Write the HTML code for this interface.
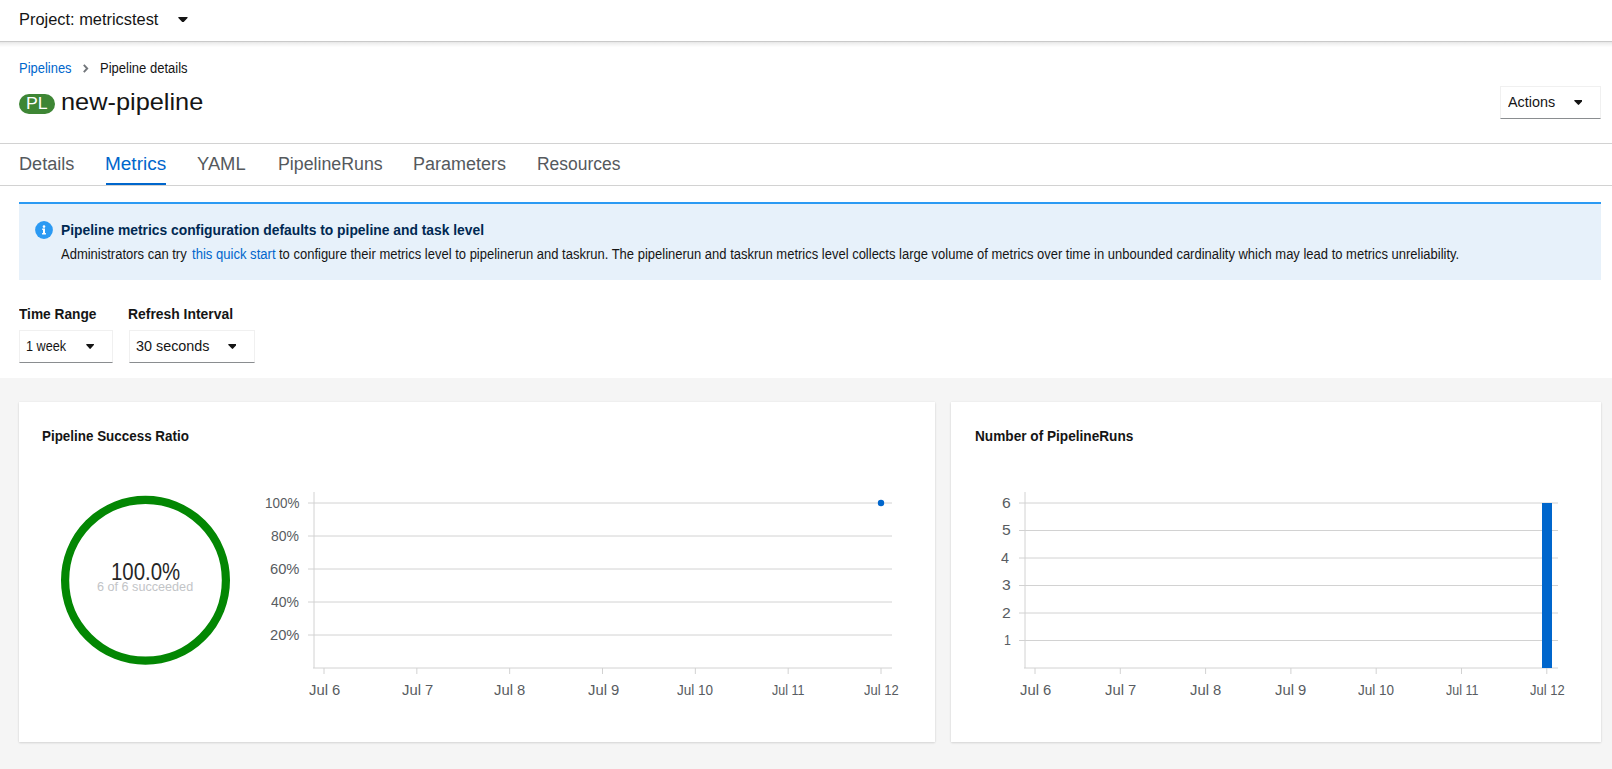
<!DOCTYPE html>
<html><head><meta charset="utf-8"><style>
html,body{margin:0;padding:0;width:1612px;height:769px;overflow:hidden;background:#fff;font-family:"Liberation Sans", sans-serif;}
.t{position:absolute;white-space:nowrap;line-height:1;transform-origin:0 0;}
.t{line-height:1.0}
</style></head><body>
<!-- header -->
<div style="position:absolute;left:0;top:0;width:1612px;height:41px;background:#fff;"></div>
<div style="position:absolute;left:0;top:41px;width:1612px;height:1px;background:#cacaca;"></div>
<div style="position:absolute;left:0;top:42px;width:1612px;height:5px;background:linear-gradient(#e6e6e6,#f1f1f1 35%,#fefefe);"></div>
<svg style="position:absolute;left:178.3px;top:16.8px" width="9.5" height="5.5" viewBox="4.6 192 298.2 168.6" preserveAspectRatio="none"><path d="M31.3 192h257.3c17.8 0 26.7 21.5 14.1 34.1L174.1 354.8c-7.8 7.8-20.5 7.8-28.3 0L17.2 226.1C4.6 213.5 13.5 192 31.3 192z" fill="#151515"/></svg>
<!-- breadcrumb chevron -->
<svg style="position:absolute;left:82px;top:63px" width="8" height="12"><path d="M1.8 1.9L5.2 5.5L1.8 9.1" stroke="#72767b" stroke-width="1.9" fill="none"/></svg>
<!-- PL badge -->
<div style="position:absolute;left:19px;top:94px;width:36px;height:20px;border-radius:10px;background:#3e8635;"></div>
<!-- actions button -->
<div style="position:absolute;left:1500px;top:86px;width:99px;height:31px;border:1px solid #f0f0f0;border-bottom-color:#8a8d90;"></div>
<svg style="position:absolute;left:1573.6px;top:100px" width="8.6" height="5" viewBox="4.6 192 298.2 168.6" preserveAspectRatio="none"><path d="M31.3 192h257.3c17.8 0 26.7 21.5 14.1 34.1L174.1 354.8c-7.8 7.8-20.5 7.8-28.3 0L17.2 226.1C4.6 213.5 13.5 192 31.3 192z" fill="#151515"/></svg>
<!-- tab lines -->
<div style="position:absolute;left:0;top:143px;width:1612px;height:1px;background:#d2d2d2;"></div>
<div style="position:absolute;left:0;top:185px;width:1612px;height:1px;background:#d2d2d2;"></div>
<div style="position:absolute;left:106px;top:183px;width:60px;height:2px;background:#0066cc;"></div>
<!-- alert -->
<div style="position:absolute;left:19px;top:202px;width:1582px;height:78px;background:#e7f1fa;border-top:2px solid #2b9af3;box-sizing:border-box;"></div>
<svg style="position:absolute;left:35px;top:221px" width="18" height="18" viewBox="0 0 18 18"><circle cx="9" cy="9" r="8.9" fill="#2b9af3"/><circle cx="9" cy="5.6" r="1.3" fill="#fff"/><path d="M7.2 7.6H10V12.1H10.9V13.6H7.1V12.1H8V9.1H7.2Z" fill="#fff"/></svg>
<!-- selects -->
<div style="position:absolute;left:19px;top:330px;width:92px;height:31px;border:1px solid #f0f0f0;border-bottom-color:#8a8d90;"></div>
<svg style="position:absolute;left:86px;top:343.9px" width="7.9" height="4.9" viewBox="4.6 192 298.2 168.6" preserveAspectRatio="none"><path d="M31.3 192h257.3c17.8 0 26.7 21.5 14.1 34.1L174.1 354.8c-7.8 7.8-20.5 7.8-28.3 0L17.2 226.1C4.6 213.5 13.5 192 31.3 192z" fill="#151515"/></svg>
<div style="position:absolute;left:129px;top:330px;width:124px;height:31px;border:1px solid #f0f0f0;border-bottom-color:#8a8d90;"></div>
<svg style="position:absolute;left:227.8px;top:343.9px" width="8.6" height="5" viewBox="4.6 192 298.2 168.6" preserveAspectRatio="none"><path d="M31.3 192h257.3c17.8 0 26.7 21.5 14.1 34.1L174.1 354.8c-7.8 7.8-20.5 7.8-28.3 0L17.2 226.1C4.6 213.5 13.5 192 31.3 192z" fill="#151515"/></svg>
<!-- gray area -->
<div style="position:absolute;left:0;top:378px;width:1612px;height:391px;background:#f5f5f5;"></div>
<!-- cards -->
<div style="position:absolute;left:19px;top:402px;width:916px;height:340px;background:#fff;box-shadow:0 1px 2px 0 rgba(3,3,3,.12),0 0 2px 0 rgba(3,3,3,.06);"></div>
<div style="position:absolute;left:951px;top:402px;width:650px;height:340px;background:#fff;box-shadow:0 1px 2px 0 rgba(3,3,3,.12),0 0 2px 0 rgba(3,3,3,.06);"></div>
<!-- charts -->
<svg style="position:absolute;left:0;top:0" width="1612" height="769">
  <circle cx="145.5" cy="580.3" r="80.4" fill="none" stroke="#038703" stroke-width="8.2"/>
  <g stroke="#d2d2d2" stroke-width="1" fill="none">
    <path d="M314 492V668M313 668H892"/>
<path d="M308 503H892M308 536H892M308 569H892M308 602H892M308 635H892"/>
<path d="M324.00 668V674M416.83 668V674M509.67 668V674M602.50 668V674M695.33 668V674M788.16 668V674M881.00 668V674"/>
<path d="M1025 492V668M1024 668H1558"/>
<path d="M1019 503.00H1558M1019 530.50H1558M1019 558.00H1558M1019 585.50H1558M1019 613.00H1558M1019 640.50H1558"/>
<path d="M1035.00 668V674M1120.30 668V674M1205.60 668V674M1290.90 668V674M1376.20 668V674M1461.50 668V674M1546.80 668V674"/>
  </g>
  <circle cx="881" cy="503" r="3.2" fill="#0066cc"/>
  <rect x="1542" y="503" width="10" height="165" fill="#0066cc"/>
</svg>

<span id="t0" class="t" style="left:18.93px;top:12.06px;font-size:16px;font-weight:400;color:#151515;transform:scaleX(1.0247)">Project: metricstest</span>
<span id="t1" class="t" style="left:18.90px;top:61.15px;font-size:14px;font-weight:400;color:#0066cc;transform:scaleX(0.9252)">Pipelines</span>
<span id="t2" class="t" style="left:100.04px;top:61.15px;font-size:14px;font-weight:400;color:#151515;transform:scaleX(0.9299)">Pipeline details</span>
<span id="t3" class="t" style="left:25.90px;top:95.21px;font-size:17px;font-weight:400;color:#ffffff;transform:scaleX(1.0400)">PL</span>
<span id="t4" class="t" style="left:61.30px;top:89.88px;font-size:24px;font-weight:400;color:#151515;transform:scaleX(1.0559)">new-pipeline</span>
<span id="t5" class="t" style="left:1508.06px;top:95.15px;font-size:14px;font-weight:400;color:#151515;transform:scaleX(1.0254)">Actions</span>
<span id="t6" class="t" style="left:19.30px;top:154.56px;font-size:18px;font-weight:400;color:#55595d;transform:scaleX(1.0073)">Details</span>
<span id="t7" class="t" style="left:105.25px;top:154.56px;font-size:18px;font-weight:400;color:#0066cc;transform:scaleX(1.0546)">Metrics</span>
<span id="t8" class="t" style="left:197.42px;top:154.56px;font-size:18px;font-weight:400;color:#55595d;transform:scaleX(1.0197)">YAML</span>
<span id="t9" class="t" style="left:278.18px;top:154.56px;font-size:18px;font-weight:400;color:#55595d;transform:scaleX(0.9873)">PipelineRuns</span>
<span id="t10" class="t" style="left:412.84px;top:154.56px;font-size:18px;font-weight:400;color:#55595d;transform:scaleX(0.9982)">Parameters</span>
<span id="t11" class="t" style="left:537.45px;top:154.56px;font-size:18px;font-weight:400;color:#55595d;transform:scaleX(0.9695)">Resources</span>
<span id="t12" class="t" style="left:60.97px;top:222.30px;font-size:15px;font-weight:700;color:#002952;transform:scaleX(0.9228)">Pipeline metrics configuration defaults to pipeline and task level</span>
<span id="t13" class="t" style="left:61.12px;top:246.95px;font-size:14px;font-weight:400;color:#151515;transform:scaleX(0.9285)">Administrators can try</span>
<span id="t14" class="t" style="left:191.92px;top:246.95px;font-size:14px;font-weight:400;color:#0066cc;transform:scaleX(0.9336)">this quick start</span>
<span id="t15" class="t" style="left:278.72px;top:246.95px;font-size:14px;font-weight:400;color:#151515;transform:scaleX(0.9280)">to configure their metrics level to pipelinerun and taskrun. The pipelinerun and taskrun metrics level collects large volume of metrics over time in unbounded cardinality which may lead to metrics unreliability.</span>
<span id="t16" class="t" style="left:19.08px;top:307.35px;font-size:14px;font-weight:700;color:#151515;transform:scaleX(0.9783)">Time Range</span>
<span id="t17" class="t" style="left:128.35px;top:307.35px;font-size:14px;font-weight:700;color:#151515;transform:scaleX(0.9927)">Refresh Interval</span>
<span id="t18" class="t" style="left:25.75px;top:339.15px;font-size:14px;font-weight:400;color:#151515;transform:scaleX(0.9025)">1 week</span>
<span id="t19" class="t" style="left:135.90px;top:339.15px;font-size:14px;font-weight:400;color:#151515;transform:scaleX(1.0267)">30 seconds</span>
<span id="t20" class="t" style="left:42.07px;top:429.15px;font-size:14px;font-weight:700;color:#151515;transform:scaleX(0.9581)">Pipeline Success Ratio</span>
<span id="t21" class="t" style="left:975.24px;top:429.05px;font-size:14px;font-weight:700;color:#151515;transform:scaleX(0.9739)">Number of PipelineRuns</span>
<span id="t22" class="t" style="left:110.57px;top:560.53px;font-size:23px;font-weight:400;color:#262626;transform:scaleX(0.8871)">100.0%</span>
<span id="t23" class="t" style="left:97.35px;top:581.04px;font-size:12px;font-weight:400;color:#c2c4c7;transform:scaleX(1.0521)">6 of 6 succeeded</span>
<span id="t24" class="t" style="left:265.30px;top:496.15px;font-size:14px;font-weight:400;color:#585c61;transform:scaleX(0.9620)">100%</span>
<span id="t25" class="t" style="left:271.00px;top:529.15px;font-size:14px;font-weight:400;color:#585c61;transform:scaleX(0.9989)">80%</span>
<span id="t26" class="t" style="left:270.30px;top:562.15px;font-size:14px;font-weight:400;color:#585c61;transform:scaleX(1.0511)">60%</span>
<span id="t27" class="t" style="left:271.00px;top:595.15px;font-size:14px;font-weight:400;color:#585c61;transform:scaleX(0.9989)">40%</span>
<span id="t28" class="t" style="left:270.30px;top:628.15px;font-size:14px;font-weight:400;color:#585c61;transform:scaleX(1.0511)">20%</span>
<span id="t29" class="t" style="left:308.80px;top:683.15px;font-size:14px;font-weight:400;color:#585c61;transform:scaleX(1.0568)">Jul 6</span>
<span id="t30" class="t" style="left:401.98px;top:683.15px;font-size:14px;font-weight:400;color:#585c61;transform:scaleX(1.0568)">Jul 7</span>
<span id="t31" class="t" style="left:494.46px;top:683.15px;font-size:14px;font-weight:400;color:#585c61;transform:scaleX(1.0568)">Jul 8</span>
<span id="t32" class="t" style="left:587.65px;top:683.15px;font-size:14px;font-weight:400;color:#585c61;transform:scaleX(1.0568)">Jul 9</span>
<span id="t33" class="t" style="left:677.08px;top:683.15px;font-size:14px;font-weight:400;color:#585c61;transform:scaleX(0.9660)">Jul 10</span>
<span id="t34" class="t" style="left:772.21px;top:683.15px;font-size:14px;font-weight:400;color:#585c61;transform:scaleX(0.8920)">Jul 11</span>
<span id="t35" class="t" style="left:863.89px;top:683.15px;font-size:14px;font-weight:400;color:#585c61;transform:scaleX(0.9268)">Jul 12</span>
<span id="t36" class="t" style="left:1019.80px;top:683.15px;font-size:14px;font-weight:400;color:#585c61;transform:scaleX(1.0568)">Jul 6</span>
<span id="t37" class="t" style="left:1105.03px;top:683.15px;font-size:14px;font-weight:400;color:#585c61;transform:scaleX(1.0568)">Jul 7</span>
<span id="t38" class="t" style="left:1190.26px;top:683.15px;font-size:14px;font-weight:400;color:#585c61;transform:scaleX(1.0568)">Jul 8</span>
<span id="t39" class="t" style="left:1275.49px;top:683.15px;font-size:14px;font-weight:400;color:#585c61;transform:scaleX(1.0568)">Jul 9</span>
<span id="t40" class="t" style="left:1358.37px;top:683.15px;font-size:14px;font-weight:400;color:#585c61;transform:scaleX(0.9660)">Jul 10</span>
<span id="t41" class="t" style="left:1445.55px;top:683.15px;font-size:14px;font-weight:400;color:#585c61;transform:scaleX(0.8920)">Jul 11</span>
<span id="t42" class="t" style="left:1529.98px;top:683.15px;font-size:14px;font-weight:400;color:#585c61;transform:scaleX(0.9268)">Jul 12</span>
<span id="t43" class="t" style="left:1002.08px;top:495.75px;font-size:14px;font-weight:400;color:#585c61;transform:scaleX(1.1200)">6</span>
<span id="t44" class="t" style="left:1001.68px;top:523.25px;font-size:14px;font-weight:400;color:#585c61;transform:scaleX(1.1200)">5</span>
<span id="t45" class="t" style="left:1001.38px;top:550.75px;font-size:14px;font-weight:400;color:#585c61;transform:scaleX(1.0261)">4</span>
<span id="t46" class="t" style="left:1001.68px;top:578.25px;font-size:14px;font-weight:400;color:#585c61;transform:scaleX(1.1200)">3</span>
<span id="t47" class="t" style="left:1002.18px;top:605.75px;font-size:14px;font-weight:400;color:#585c61;transform:scaleX(1.1200)">2</span>
<span id="t48" class="t" style="left:1004.18px;top:633.25px;font-size:14px;font-weight:400;color:#585c61;transform:scaleX(0.8800)">1</span>
</body></html>
